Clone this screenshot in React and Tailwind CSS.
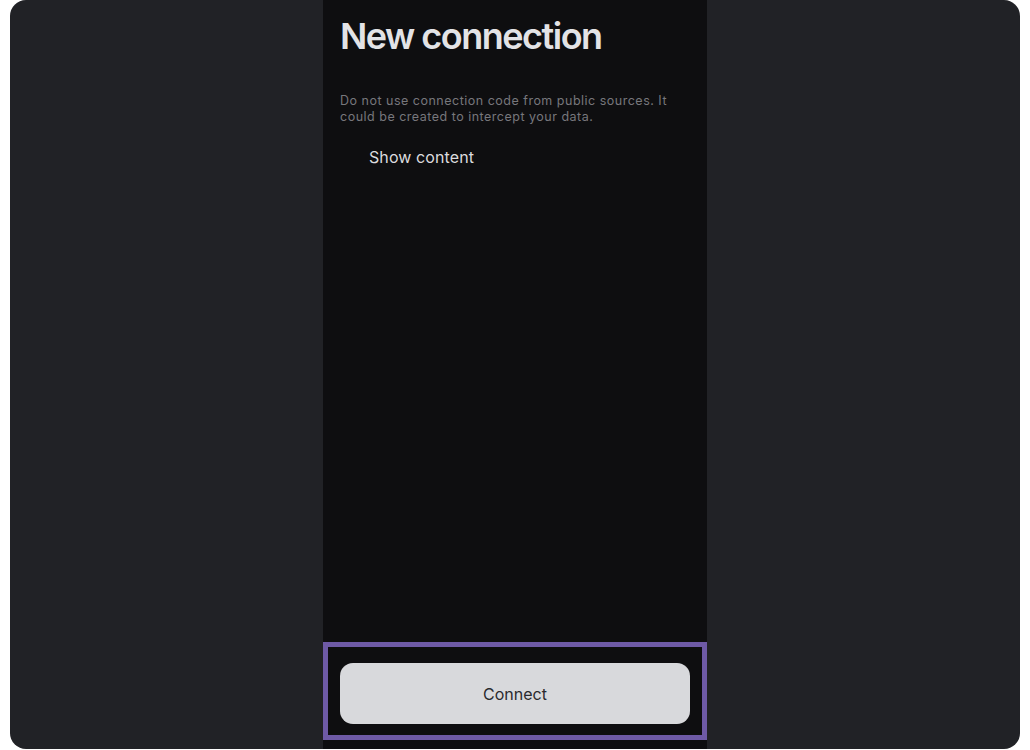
export default function App() {
  return (
    <div className="w-[1030px] h-[750px] bg-white px-[10px] font-['Inter','Liberation_Sans',sans-serif]">
      <div className="h-[749px] rounded-2xl bg-[#212226] flex justify-center overflow-hidden">
        <div className="w-[384px] h-full bg-[#0e0e10] flex flex-col">
          <div className="px-[17px] pt-[14px]">
            <h1 className="text-[36px] leading-[44px] font-semibold tracking-[-1.5px] text-[#e3e3e6]">
              New connection
            </h1>
            <p className="mt-[35px] text-[12.5px] leading-[16px] tracking-[0.5px] text-[#77777c]">
              Do not use connection code from public sources. It could be created to intercept your data.
            </p>
            <button className="mt-[22px] ml-[29px] text-[16px] leading-[20px] tracking-[0.1px] text-[#dcdcdf]">
              Show content
            </button>
          </div>
          <div className="flex-1" />
          <div className="border-[5px] border-[#6e5aa6] pt-[16px] pb-[11px] px-[12px]">
            <button className="w-full h-[61px] rounded-[13px] bg-[#d8d9dc] text-[16px] text-[#2a2a2e]">
              Connect
            </button>
          </div>
          <div className="h-[9px]" />
        </div>
      </div>
    </div>
  );
}
